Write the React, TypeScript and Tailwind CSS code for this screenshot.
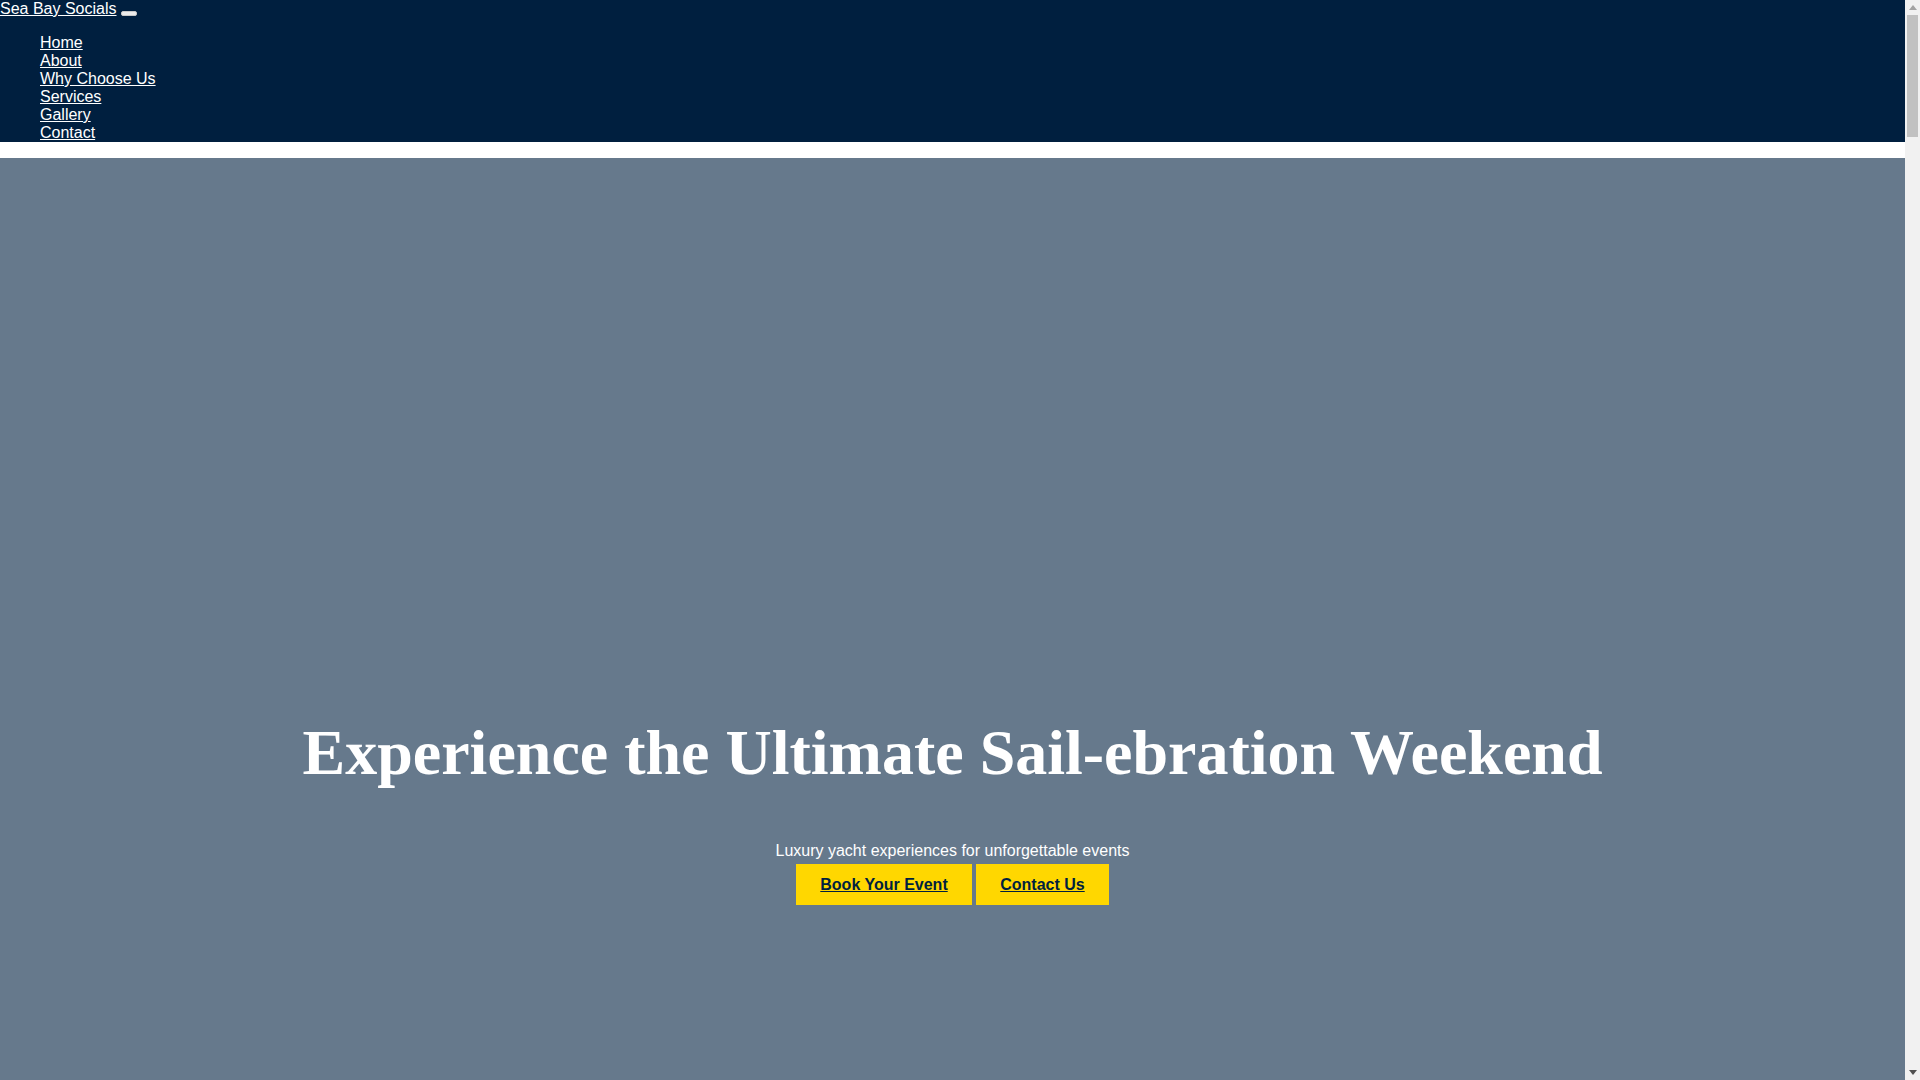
import React from "react";

const links = ["Home", "About", "Why Choose Us", "Services", "Gallery", "Contact"];

function Scrollbar() {
  return (
    <aside className="flex h-screen w-[15px] shrink-0 flex-col bg-[#f1f1f1]">
      <div className="flex h-[15px] items-center justify-center">
        <svg width="8" height="5" viewBox="0 0 8 5">
          <polygon points="0,5 8,5 4,0" fill="#a3a3a3" />
        </svg>
      </div>
      <div className="flex flex-1 flex-col items-center">
        <div className="h-[122px] w-[11px] bg-[#c1c1c1]" />
      </div>
      <div className="flex h-[15px] items-center justify-center">
        <svg width="8" height="5" viewBox="0 0 8 5">
          <polygon points="0,0 8,0 4,5" fill="#505050" />
        </svg>
      </div>
    </aside>
  );
}

export default function App() {
  return (
    <div className="flex h-screen overflow-hidden bg-white font-['Liberation_Sans',Arial,sans-serif] text-[16px] leading-[18px]">
      <div className="min-w-0 flex-1">
        <nav className="bg-[#001f3f] text-white">
          <div className="flex h-[18px] items-start">
            <a href="#" className="leading-[18px] text-white underline">
              Sea Bay Socials
            </a>
            <button
              aria-label="Menu"
              className="ml-[4px] mt-[11px] h-[5px] w-[16px] rounded-[2px] border border-[#c8c8c8] bg-[#ececec]"
            />
          </div>
          <ul className="mt-4 pl-10">
            {links.map((l) => (
              <li key={l} className="h-[18px] leading-[18px]">
                <a href="#" className="text-white underline">
                  {l}
                </a>
              </li>
            ))}
          </ul>
        </nav>
        <div className="h-4 bg-white" />
        <section className="flex flex-col items-center bg-[#66798c] pb-[395px] pt-[558px] text-white">
          <h1 className="text-center font-['Liberation_Serif','Times_New_Roman',serif] text-[64px] font-bold leading-[normal] text-white">
            Experience the Ultimate Sail-ebration Weekend
          </h1>
          <p className="mt-[52px] text-center leading-[18px]">Luxury yacht experiences for unforgettable events</p>
          <div className="mt-[4px] flex gap-1">
            <a
              href="#"
              className="flex h-[41px] w-[176px] items-center justify-center bg-[#ffd700] font-bold text-[#001f3f] underline"
            >
              Book Your Event
            </a>
            <a
              href="#"
              className="flex h-[41px] w-[133px] items-center justify-center bg-[#ffd700] font-bold text-[#001f3f] underline"
            >
              Contact Us
            </a>
          </div>
        </section>
      </div>
      <Scrollbar />
    </div>
  );
}
